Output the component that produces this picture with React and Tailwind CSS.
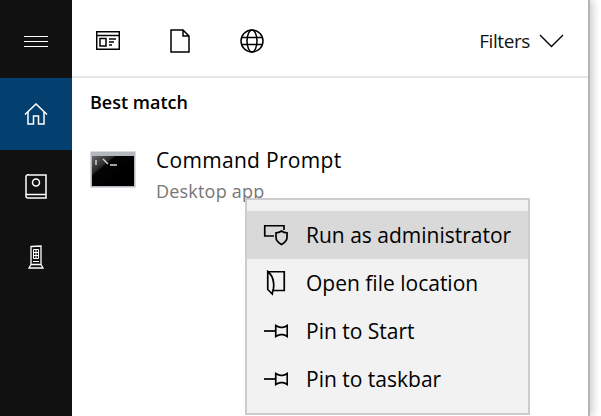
const font = { fontFamily: "'Open Sans', sans-serif" };

const ShieldIcon = () => (
  <svg width="26" height="24" viewBox="0 0 26 24" fill="none" stroke="#000" strokeWidth="1.700">
    <path d="M11 13H1.750V2.750H21V7" />
    <path d="M18.500 8c-1.800 1.300-3.500 1.800-5.500 1.800v4.700c0 3 2 5 5.500 7 3.500-2 5.500-4 5.500-7V9.800c-2 0-3.700-.5-5.500-1.800z" />
  </svg>
);

const FolderIcon = () => (
  <svg width="24" height="26" viewBox="0 0 24 26" fill="none" stroke="#000" strokeWidth="1.700">
    <path d="M5 1.750h16.250V20.500H10" />
    <path d="M4.750 1.500v18l4.500 4.500c.3-2.500.8-4 1.200-5.500.4-2 .3-4.500 0-6.500-.4-3-2-7.500-5.700-10.500z" />
  </svg>
);

const PinIcon = () => (
  <svg width="25" height="14" viewBox="0 0 25 14" fill="none" stroke="#000" strokeWidth="1.700">
    <path d="M1 7h11" />
    <path d="M12.750 1.500c2 1.200 3 1.800 5 1.800h2c1.500 0 2.700-.6 4.500-1.800v11c-1.800-1.200-3-1.800-4.500-1.800h-2c-2 0-3 .6-5 1.800z" />
  </svg>
);

const MenuItem = ({ icon, label, active }) => (
  <div className={`h-12 flex items-center ${active ? "bg-[#d9d9d9]" : ""}`}>
    <div className="w-[59px] pl-4 flex justify-start shrink-0">{icon}</div>
    <span className="text-[21px] text-black pt-[2px]">{label}</span>
  </div>
);

export default function App() {
  return (
    <div className="w-[601px] h-[416px] bg-white overflow-hidden" style={font}>
      <div className="w-[590px] h-full flex relative bg-white border-r-2 border-[#b5b5b5] shadow-[3px_0_8px_rgba(0,0,0,0.2)]">
        {/* sidebar */}
        <div className="w-[72px] shrink-0 bg-[#111111] flex flex-col items-center">
          <div className="w-full h-[78px] flex flex-col items-center justify-center gap-[4px] pt-[5px]">
            <div className="w-6 h-px bg-white"></div>
            <div className="w-6 h-px bg-white"></div>
            <div className="w-6 h-px bg-white"></div>
          </div>
          <div className="w-full h-[72px] bg-[#04406f] flex items-center justify-center">
            <svg width="24" height="22" viewBox="0 0 24 22" fill="none" stroke="#fff" strokeWidth="1.500">
              <path d="M1 11.500 12 1l11 10.500" />
              <path d="M4 9v12h5.500v-8h5v8H20V9" />
            </svg>
          </div>
          <div className="w-full h-[72px] flex items-center justify-center">
            <svg width="22" height="25" viewBox="0 0 22 25" fill="none" stroke="#fff" strokeWidth="1.500">
              <path d="M4 1h17v23H3a2 2 0 0 1-2-2V3a2 2 0 0 1 3-2z" />
              <path d="M1 20.500h20" />
              <circle cx="11" cy="8.500" r="3.500" />
            </svg>
          </div>
          <div className="w-full h-[70px] flex items-center justify-center">
            <svg width="16" height="24" viewBox="0 0 16 24" fill="none" stroke="#fff" strokeWidth="1.300">
              <path d="M3 1.500 13 1v18.500H3zM3 19.500l-2 3.500h14l-2-3.500" />
              <path d="M5.500 4.500h5v9h-5zM8 4.500v9M5.500 7.500h5M5.500 10.500h5" strokeWidth="1" />
              <path d="M5 16.500h6" strokeWidth="1" />
            </svg>
          </div>
        </div>

        {/* main */}
        <div className="flex-1 flex flex-col">
          <div className="h-[78px] shrink-0 border-b-2 border-[#e6e6e6] flex items-center pt-[6px] pl-[24px] pr-[24px]">
            <svg className="mr-[50px]" width="24" height="20" viewBox="0 0 24 20" fill="none" stroke="#000" strokeWidth="1.500">
              <path d="M.7.7h22.600v17.600H.7zM.7 4.500h22.600" />
              <path d="M4 7.500h6v7.500H4zM13 8h7M13 11h5M13 14h3" />
            </svg>
            <svg className="mr-[50px]" width="20" height="24" viewBox="0 0 20 24" fill="none" stroke="#000" strokeWidth="1.500">
              <path d="M1 1h12l6 6v16H1zM13 1v6h6" />
            </svg>
            <svg width="24" height="24" viewBox="0 0 24 24" fill="none" stroke="#000" strokeWidth="1.500">
              <circle cx="12" cy="12" r="11" />
              <ellipse cx="12" cy="12" rx="5" ry="11" />
              <path d="M1 8.500h22M1 15.500h22" />
            </svg>
            <span className="ml-auto text-[19px] text-[#111] tracking-[-0.4px]">Filters</span>
            <svg className="ml-[9px]" width="25" height="14" viewBox="0 0 25 14" fill="none" stroke="#000" strokeWidth="1.400">
              <path d="M1 1l11.500 11.500L24 1" />
            </svg>
          </div>

          <div className="pl-[18px] pt-[10px]">
            <div className="text-[18px] leading-[28px] font-semibold text-black">Best match</div>
            <div className="flex mt-[30px]">
              <svg className="mt-[5px] shrink-0" width="46" height="37" viewBox="0 0 46 37">
                <defs>
                  <linearGradient id="glass" x1="0" y1="0" x2="0.700" y2="0.600">
                    <stop offset="0" stopColor="#6a6a6a" />
                    <stop offset="0.420" stopColor="#2a2a2a" />
                    <stop offset="0.480" stopColor="#050505" />
                    <stop offset="1" stopColor="#000" />
                  </linearGradient>
                </defs>
                <rect x="0.500" y="0.500" width="45" height="36" fill="#b4b8be" />
                <rect x="2" y="5" width="42" height="30" fill="url(#glass)" />
                <path d="M6 9v5M13 8l5 5M20 14h7" stroke="#d8d8d8" strokeWidth="1.400" fill="none" />
              </svg>
              <div className="ml-[20px]">
                <div className="text-[21px] leading-[28px] text-black tracking-[0.3px]">Command Prompt</div>
                <div className="text-[18px] leading-[24px] mt-[5px] text-[#767676] tracking-[0.2px]">Desktop app</div>
              </div>
            </div>
          </div>
        </div>

        {/* context menu */}
        <div className="absolute left-[245px] top-[198px] w-[285px] h-[217px] bg-[#f2f2f2] border-2 border-[#cccccc] pt-[11px]">
          <MenuItem icon={<ShieldIcon />} label="Run as administrator" active />
          <MenuItem icon={<FolderIcon />} label="Open file location" />
          <MenuItem icon={<PinIcon />} label="Pin to Start" />
          <MenuItem icon={<PinIcon />} label="Pin to taskbar" />
        </div>
      </div>
    </div>
  );
}
